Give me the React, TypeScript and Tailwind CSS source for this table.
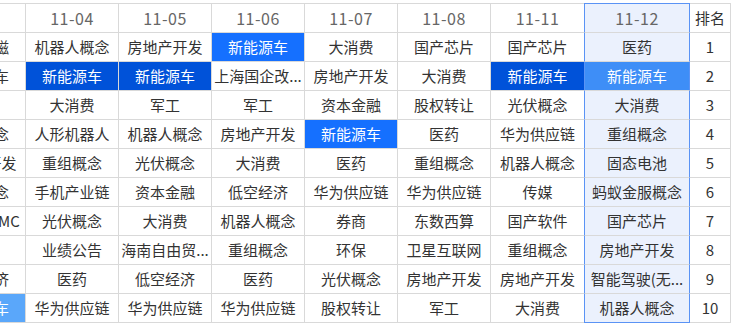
import React from "react";

type Tone = "" | "dark" | "mid" | "hl" | "light";

const headers = ["11-01", "11-04", "11-05", "11-06", "11-07", "11-08", "11-11", "11-12", "排名"];

const rows: [string, Tone][][] = [
  [["稀土永磁", ""], ["机器人概念", ""], ["房地产开发", ""], ["新能源车", "mid"], ["大消费", ""], ["国产芯片", ""], ["国产芯片", ""], ["医药", ""]],
  [["汽车整车", ""], ["新能源车", "dark"], ["新能源车", "dark"], ["上海国企改...", ""], ["房地产开发", ""], ["大消费", ""], ["新能源车", "dark"], ["新能源车", "hl"]],
  [["医药", ""], ["大消费", ""], ["军工", ""], ["军工", ""], ["资本金融", ""], ["股权转让", ""], ["光伏概念", ""], ["大消费", ""]],
  [["重组概念", ""], ["人形机器人", ""], ["机器人概念", ""], ["房地产开发", ""], ["新能源车", "mid"], ["医药", ""], ["华为供应链", ""], ["重组概念", ""]],
  [["房地产开发", ""], ["重组概念", ""], ["光伏概念", ""], ["大消费", ""], ["医药", ""], ["重组概念", ""], ["机器人概念", ""], ["固态电池", ""]],
  [["光伏概念", ""], ["手机产业链", ""], ["资本金融", ""], ["低空经济", ""], ["华为供应链", ""], ["华为供应链", ""], ["传媒", ""], ["蚂蚁金服概念", ""]],
  [["智算中心MC", ""], ["光伏概念", ""], ["大消费", ""], ["机器人概念", ""], ["券商", ""], ["东数西算", ""], ["国产软件", ""], ["国产芯片", ""]],
  [["军工", ""], ["业绩公告", ""], ["海南自由贸...", ""], ["重组概念", ""], ["环保", ""], ["卫星互联网", ""], ["重组概念", ""], ["房地产开发", ""]],
  [["低空经济", ""], ["医药", ""], ["低空经济", ""], ["医药", ""], ["光伏概念", ""], ["房地产开发", ""], ["房地产开发", ""], ["智能驾驶(无...", ""]],
  [["新能源车", "light"], ["华为供应链", ""], ["华为供应链", ""], ["华为供应链", ""], ["股权转让", ""], ["军工", ""], ["大消费", ""], ["机器人概念", ""]],
];

function toneClass(t: Tone, hlCol: boolean): string {
  if (t === "dark") return "bg-[#0052d9] text-white";
  if (t === "mid") return "bg-[#1570ff] text-white";
  if (t === "hl") return "bg-[#3e8ef7] text-white";
  if (t === "light") return "bg-[#5aa7fa] text-white";
  return hlCol ? "bg-[#ebf1fd] text-[#333]" : "bg-white text-[#333]";
}

function borderClass(col: number, isHeader: boolean, isLast: boolean): string {
  if (col === 7) {
    if (isHeader) return "border-l border-r border-t border-b border-l-[#5a93f5] border-r-[#5a93f5] border-t-[#5a93f5] border-b-[#d9d9d9]";
    if (isLast) return "border-l border-r border-b border-[#5a93f5]";
    return "border-l border-r border-b border-l-[#5a93f5] border-r-[#5a93f5] border-b-[#d9d9d9]";
  }
  if (col === 6) {
    return isHeader ? "border-t border-b border-[#d9d9d9]" : "border-b border-[#d9d9d9]";
  }
  return isHeader ? "border-t border-b border-r border-[#d9d9d9]" : "border-b border-r border-[#d9d9d9]";
}

export default function App() {
  return (
    <div className="w-[733px] h-[329px] overflow-hidden bg-white font-['Noto_Sans_CJK_SC','Microsoft_YaHei',sans-serif]">
      <div className="pt-[3px] -ml-[67px]">
        <div className="grid grid-cols-[93px_93px_93px_93px_93px_93px_93px_106px_41px] w-[798px]">
          {headers.map((h, i) => (
            <div
              key={"h" + i}
              className={
                "h-[30px] flex items-center justify-center whitespace-nowrap overflow-hidden " +
                borderClass(i, true, false) +
                (i === 7 ? " bg-[#ebf1fd]" : " bg-white") +
                (i === 8 ? " text-[15px] text-[#333]" : " text-[16px] text-[#666] tracking-[0.5px]")
              }
            >
              {i === 0 ? "" : h}
            </div>
          ))}
          {rows.map((r, ri) => (
            <React.Fragment key={"r" + ri}>
              {r.map(([txt, tone], ci) => (
                <div
                  key={ci}
                  className={
                    "h-[29px] flex items-center justify-center whitespace-nowrap overflow-hidden text-[15px] " +
                    borderClass(ci, false, ri === rows.length - 1) +
                    " " +
                    toneClass(tone, ci === 7)
                  }
                >
                  {txt}
                </div>
              ))}
              <div
                className={
                  "h-[29px] flex items-center justify-center text-[15px] text-[#333] bg-white " +
                  borderClass(8, false, false)
                }
              >
                {ri + 1}
              </div>
            </React.Fragment>
          ))}
        </div>
      </div>
    </div>
  );
}
